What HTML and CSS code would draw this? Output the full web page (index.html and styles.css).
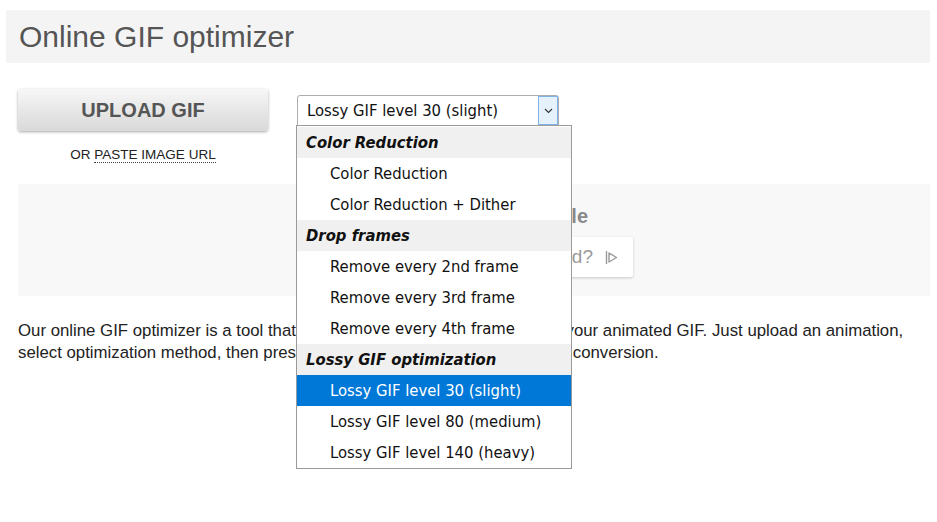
FILE: index.html
```html
<!DOCTYPE html>
<html>
<head>
<meta charset="utf-8">
<link rel="stylesheet" href="styles.css">
</head>
<body>
<div class="header"><h1>Online GIF optimizer</h1></div>
<div class="controls">
  <div class="upload-col">
    <div class="upload-btn">UPLOAD GIF</div>
    <div class="paste">OR <span class="dotted">PASTE IMAGE URL</span></div>
  </div>
  <div class="select-wrap">
    <div class="select">
      <span class="select-text">Lossy GIF level 30 (slight)</span>
      <span class="arrow"><svg width="9" height="6" viewBox="0 0 9 6"><path d="M1 1 L4.5 4.5 L8 1" fill="none" stroke="#333" stroke-width="1.1"/></svg></span>
    </div>
    <div class="dropdown">
      <div class="group">Color Reduction</div>
      <div class="opt">Color Reduction</div>
      <div class="opt">Color Reduction + Dither</div>
      <div class="group">Drop frames</div>
      <div class="opt">Remove every 2nd frame</div>
      <div class="opt">Remove every 3rd frame</div>
      <div class="opt">Remove every 4th frame</div>
      <div class="group">Lossy GIF optimization</div>
      <div class="opt selected">Lossy GIF level 30 (slight)</div>
      <div class="opt">Lossy GIF level 80 (medium)</div>
      <div class="opt">Lossy GIF level 140 (heavy)</div>
    </div>
  </div>
</div>
<div class="ad">
  <div class="ad-title">Ad not visible</div>
  <div class="ad-btn">Why was this ad blocked? <svg width="13" height="15" viewBox="0 0 13 15"><path d="M1.5 1 V14" stroke="#999" stroke-width="1.4"/><path d="M4 3 L11.5 7.5 L4 12 Z" fill="none" stroke="#999" stroke-width="1.4" stroke-linejoin="round"/></svg></div>
</div>
<p class="desc">Our online GIF optimizer is a tool that allows you to reduce the file size of your animated GIF. Just upload an animation, select optimization method, then press "Optimize GIF!" button to begin the conversion.</p>
</body>
</html>
```

FILE: styles.css
```css
html, body {
  margin: 0;
  padding: 0;
  background: #fff;
}
body {
  min-height: 522px;
  font-family: "Liberation Sans", Arial, sans-serif;
  color: #222;
}
.header {
  margin: 10px 7px 0 6px;
  height: 53px;
  background: #f4f4f4;
  padding-left: 13px;
  display: flex;
  align-items: center;
}
.header h1 {
  margin: 0;
  font-weight: normal;
  font-size: 30px;
  color: #555;
}
.controls {
  display: flex;
  margin-top: 26px;
  padding-left: 18px;
  align-items: flex-start;
}
.upload-col {
  width: 250px;
  display: flex;
  flex-direction: column;
  align-items: center;
}
.upload-btn {
  width: 250px;
  height: 42px;
  border-radius: 3px;
  background: linear-gradient(#f7f7f7, #e6e6e6 55%, #d9d9d9);
  box-shadow: 0 1px 3px rgba(0,0,0,0.35);
  color: #555;
  font-weight: bold;
  font-size: 20px;
  display: flex;
  align-items: center;
  justify-content: center;
}
.paste {
  margin-top: 16px;
  font-size: 13.5px;
  color: #222;
}
.dotted {
  border-bottom: 1px dotted #444;
}
.select-wrap {
  position: relative;
  margin-left: 29px;
  margin-top: 6px;
}
.select {
  width: 260px;
  height: 29px;
  border: 1px solid #adadad;
  border-radius: 3px 3px 0 0;
  background: #fff;
  display: flex;
  align-items: center;
  font-family: "DejaVu Sans Condensed", "DejaVu Sans", sans-serif;
  font-size: 16.5px;
  color: #111;
}
.select-text {
  padding-left: 9px;
  flex: 1;
}
.arrow {
  width: 20px;
  height: 29px;
  background: #e5f1fb;
  border: 1px solid #7eb4ea;
  box-sizing: border-box;
  display: flex;
  align-items: center;
  justify-content: center;
}
.dropdown {
  position: absolute;
  left: -1px;
  top: 30px;
  width: 274px;
  border: 1px solid #9a9a9a;
  background: #fff;
  padding: 1px 0 0;
  font-family: "DejaVu Sans Condensed", "DejaVu Sans", sans-serif;
  font-size: 16.5px;
  color: #111;
  z-index: 5;
}
.group {
  height: 31px;
  line-height: 31px;
  background: #f0f0f0;
  font-weight: bold;
  font-style: italic;
  padding-left: 9px;
}
.opt {
  height: 31px;
  line-height: 31px;
  padding-left: 33px;
}
.opt.selected {
  background: #0078d7;
  color: #fff;
}
.ad {
  margin: 22px 7px 0 18px;
  height: 112px;
  background: #f8f8f8;
  display: flex;
  flex-direction: column;
  align-items: flex-end;
  padding-right: 297px;
  box-sizing: border-box;
}
.ad-title {
  margin-top: 21px;
  margin-right: 45px;
  font-size: 20px;
  font-weight: bold;
  color: #8a8a8a;
}
.ad-btn {
  margin-top: 9px;
  height: 40px;
  padding: 0 15px 0 12px;
  background: #fff;
  box-shadow: 0 1px 3px rgba(0,0,0,0.2);
  border-radius: 2px;
  display: flex;
  align-items: center;
  gap: 12px;
  font-size: 19px;
  color: #999;
}
.desc {
  margin: 24px 18px 0 18px;
  font-size: 16.8px;
  line-height: 22px;
  color: #222;
}
```
